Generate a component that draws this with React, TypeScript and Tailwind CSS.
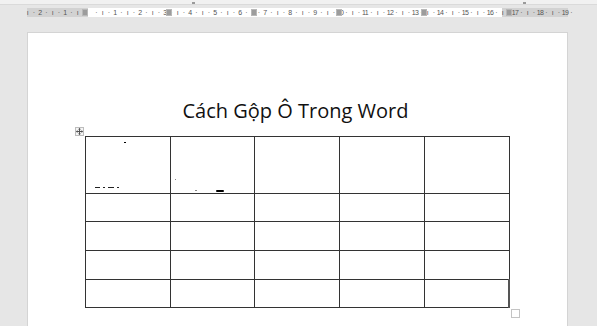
import React from "react";

const ticks: { q: number; label: string }[] = [];
for (let q = -10; q <= 77; q++) {
  const r = ((q % 4) + 4) % 4;
  let label = "·";
  if (r === 0) label = q === 0 ? "" : String(Math.abs(q / 4));
  else if (r === 2) label = "ı";
  ticks.push({ q, label });
}

const markers = [-0.2, 3.16, 6.56, 9.96, 13.36, 16.76];

const rowHeights = ["h-[57px]", "h-[28px]", "h-[29px]", "h-[29px]", "h-[28px]"];

export default function App() {
  return (
    <div className="w-[597px] h-[326px] bg-[#e6e6e6] overflow-hidden flex flex-col font-['Liberation_Sans',sans-serif]">
      {/* top strip */}
      <div className="h-[5px] bg-[#f1f1f1] border-b border-[#dadada] relative">
        <div className="absolute left-[192px] top-[2px] w-[3px] h-[2px] bg-[#9a9a9a]" />
        <div className="absolute left-[523px] top-[2px] w-[3px] h-[2px] bg-[#9a9a9a]" />
      </div>

      {/* ruler */}
      <div className="mt-[3px] ml-[27px] w-[541px] h-[9px] relative flex">
        <div className="w-[61px] bg-[#d2d2d2]" />
        <div className="flex-1 bg-white" />
        <div className="w-[66px] bg-[#d2d2d2]" />
        <div className="absolute inset-y-0 left-[-2.6px] flex overflow-hidden">
          {ticks.map((t) => (
            <div
              key={t.q}
              className="w-[6.25px] shrink-0 flex items-center justify-center text-[7px] leading-none text-[#555] tracking-[-0.5px]"
            >
              {t.label}
            </div>
          ))}
        </div>
        {markers.map((m) => (
          <div
            key={m}
            className="absolute top-[1px] w-[6px] h-[7px] bg-[#9c9c9c] border border-[#b8b8b8]"
            style={{ left: 63 + m * 25 - 3 }}
          />
        ))}
      </div>

      {/* page */}
      <div className="mt-[15px] ml-[27px] w-[541px] flex-1 bg-white border border-b-0 border-[#d4d4d4] flex flex-col">
        <div className="mt-[64px] text-center text-[20px] leading-[28px] text-[#111] font-['Open_Sans',sans-serif] pr-[4px]">
          Cách Gộp Ô Trong Word
        </div>

        <div className="relative ml-[57px] mt-[11px] w-[425px]">
          {/* move handle */}
          <div className="absolute left-[-10px] top-[-9px] w-[9px] h-[9px] border border-[#bdbdbd] bg-[#f5f5f5] flex items-center justify-center">
            <svg width="7" height="7" viewBox="0 0 7 7" fill="#555">
              <rect x="3" y="0.5" width="1" height="6" />
              <rect x="0.5" y="3" width="6" height="1" />
              <path d="M3.5 0 L2 1.5 H5 Z M3.5 7 L2 5.5 H5 Z M0 3.5 L1.5 2 V5 Z M7 3.5 L5.5 2 V5 Z" />
            </svg>
          </div>

          <table className="w-[425px] border-collapse table-fixed">
            <tbody>
              {rowHeights.map((h, r) => (
                <tr key={r} className={h}>
                  {[0, 1, 2, 3, 4].map((c) => (
                    <td
                      key={c}
                      className={
                        "border border-[#333] p-0 relative " +
                        (r === 4 && c === 4 ? "border-r-2 border-r-[#555]" : "")
                      }
                    >
                      {r === 0 && c === 0 && (
                        <>
                          <div className="absolute left-[38px] top-[5px] w-[2px] h-[1px] bg-black" />
                          <div className="absolute left-[9px] bottom-[5px] w-[33px] h-[1px] flex gap-[3px]">
                            <div className="w-[5px] bg-[#222]" />
                            <div className="w-[2px] bg-[#222]" />
                            <div className="w-[6px] bg-[#222]" />
                            <div className="w-[2px] bg-[#222]" />
                          </div>
                        </>
                      )}
                      {r === 0 && c === 1 && (
                        <>
                          <div className="absolute left-[4px] top-[42px] w-[1px] h-[1px] bg-[#888]" />
                          <div className="absolute left-[24px] bottom-[2px] w-[2px] h-[1px] bg-[#888]" />
                          <div className="absolute left-[45px] bottom-[1px] w-[8px] h-[2px] rounded-full bg-black" />
                        </>
                      )}
                    </td>
                  ))}
                </tr>
              ))}
            </tbody>
          </table>

          {/* resize handle */}
          <div className="absolute right-[-10px] bottom-[-10px] w-[9px] h-[9px] border border-[#c4c4c4] bg-white" />
        </div>
      </div>
    </div>
  );
}
